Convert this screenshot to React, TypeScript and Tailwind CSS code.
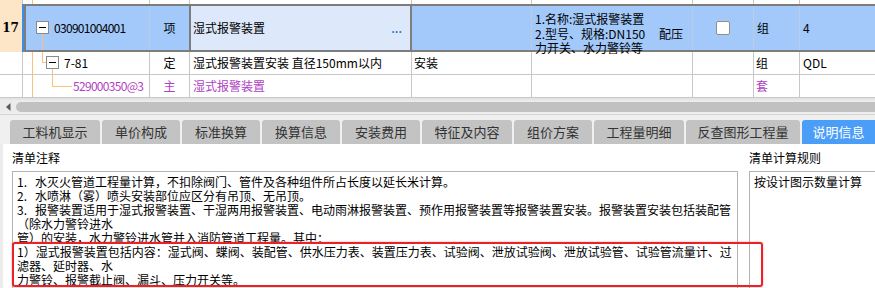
import React from "react";

const ORANGE = "#f7c27c";

function TreeBox({ left, top }: { left: number; top: number }) {
  return (
    <div
      className="absolute w-[13px] h-[13px] border border-[#8a8a8a] bg-white flex items-center justify-center"
      style={{ left, top }}
    >
      <div className="w-[7px] h-[1px] bg-black" />
    </div>
  );
}

function Lines({ segs, h }: { segs: [number, number, number, number][]; h: number }) {
  return (
    <svg className="absolute left-0 top-0" width={130} height={h}>
      {segs.map((s, i) => (
        <line key={i} x1={s[0]} y1={s[1]} x2={s[2]} y2={s[3]} stroke={ORANGE} strokeWidth={1} shapeRendering="crispEdges" />
      ))}
    </svg>
  );
}

function Grid() {
  const b = "border-r border-[#c8c8c8]";
  return (
    <div className="font-['Noto_Sans_CJK_SC',sans-serif] text-[12px] leading-[14px]">
      {/* partial row */}
      <div className="flex h-[4px]">
        <div className={`w-[23px] bg-[#fde5c8] ${b}`} />
        <div className={`w-[127px] relative ${b}`}>
          <Lines h={4} segs={[[9.5, 0, 9.5, 4]]} />
        </div>
        <div className={`w-[40px] ${b}`} />
        <div className={`w-[222px] ${b}`} />
        <div className={`w-[120px] ${b}`} />
        <div className={`w-[161px] ${b}`} />
        <div className={`w-[61px] ${b}`} />
        <div className={`w-[46px] ${b}`} />
        <div className="flex-1" />
      </div>
      {/* selected row */}
      <div className="flex h-[48px]">
        <div className="w-[24px] bg-[#fde5c8] border-r-2 border-[#3a8ee6] flex items-center justify-center pr-[1px] font-['DejaVu_Serif',serif] font-bold text-[12px]">
          17
        </div>
        <div className="flex-1 flex border-y-2 border-l-2 border-[#7d7d7d] bg-[#a2c9fa]">
          <div className="w-[124px] relative border-r border-[#bccde3] flex items-center pl-[28px]">
            <Lines h={44} segs={[[16.5, 28, 16.5, 44]]} />
            <TreeBox left={10} top={15} />
            <span className="relative tracking-[-0.7px]">030901004001</span>
          </div>
          <div className="w-[39px] flex items-center justify-center">项</div>
          <div className="w-[223px] border-x-2 border-[#7d7d7d] bg-[#dde9fb] flex items-center justify-between pl-[2px] pr-[8px]">
            <span>湿式报警装置</span>
            <span className="text-[#2f7fd0] font-bold text-[11px] tracking-[0px]">...</span>
          </div>
          <div className="w-[120px] border-r border-[#bccde3]" />
          <div className="w-[161px] border-r border-[#bccde3] pl-[3px] pt-[6px] leading-[14.5px] whitespace-nowrap">
            <div>1.名称:湿式报警装置</div>
            <div className="flex justify-between pr-[9px]">
              <span>2.型号、规格:DN150</span>
              <span>配压</span>
            </div>
            <div>力开关、水力警铃等</div>
          </div>
          <div className="w-[61px] border-r border-[#bccde3] flex items-center justify-center">
            <div className="w-[14px] h-[14px] bg-white border border-[#8e8e8e] rounded-[2px]" />
          </div>
          <div className="w-[46px] border-r border-[#bccde3] flex items-center pl-[3px]">组</div>
          <div className="flex-1 flex items-center pl-[3px]">4</div>
        </div>
      </div>
      {/* row 7-81 */}
      <div className="flex h-[23px] border-b border-[#c8c8c8]">
        <div className={`w-[23px] ${b}`} />
        <div className={`w-[127px] relative ${b} flex items-center pl-[41px]`}>
          <Lines h={22} segs={[[9.5, 0, 9.5, 22], [19.5, 0, 19.5, 10], [19, 10.5, 23, 10.5], [29.5, 16, 29.5, 22]]} />
          <TreeBox left={23} top={4} />
          <span className="relative">7-81</span>
        </div>
        <div className={`w-[40px] ${b} flex items-center justify-center`}>定</div>
        <div className={`w-[222px] ${b} flex items-center pl-[3px] whitespace-nowrap`}>湿式报警装置安装 直径150mm以内</div>
        <div className={`w-[120px] ${b} flex items-center pl-[2px]`}>安装</div>
        <div className={`w-[161px] ${b}`} />
        <div className={`w-[61px] ${b}`} />
        <div className={`w-[46px] ${b} flex items-center pl-[2px]`}>组</div>
        <div className="flex-1 flex items-center pl-[3px]">QDL</div>
      </div>
      {/* row main material */}
      <div className="flex h-[23px] border-b border-[#c8c8c8] text-[#b03fc4]">
        <div className={`w-[23px] ${b}`} />
        <div className={`w-[127px] relative ${b} flex items-center pl-[50px]`}>
          <Lines h={22} segs={[[9.5, 0, 9.5, 22], [29.5, 0, 29.5, 11], [29, 11.5, 49, 11.5]]} />
          <span className="relative tracking-[-0.7px] whitespace-nowrap">529000350@3</span>
        </div>
        <div className={`w-[40px] ${b} flex items-center justify-center`}>主</div>
        <div className={`w-[222px] ${b} flex items-center pl-[3px]`}>湿式报警装置</div>
        <div className={`w-[120px] ${b}`} />
        <div className={`w-[161px] ${b}`} />
        <div className={`w-[61px] ${b}`} />
        <div className={`w-[46px] ${b} flex items-center pl-[2px]`}>套</div>
        <div className="flex-1" />
      </div>
    </div>
  );
}

function Scroll() {
  return (
    <div>
      <div className="h-[2px] bg-[#e4e4e4]" />
      <div className="h-[13px] bg-[#ececec] flex items-center">
        <svg className="ml-[6px]" width="5" height="8" viewBox="0 0 5 8">
          <polygon points="4.5,0 0,4 4.5,8" fill="#5a5a5a" />
        </svg>
        <div className="ml-[5px] flex-1 h-[10px] rounded-l-full bg-[#c1c1c1]" />
      </div>
      <div className="h-[1px] bg-[#f2f2f2]" />
      <div className="h-[1px] bg-[#d2d2d2]" />
      <div className="h-[5px] bg-[#f0f0f0]" />
    </div>
  );
}

const tabs: [string, number][] = [
  ["工料机显示", 90],
  ["单价构成", 78],
  ["标准换算", 78],
  ["换算信息", 78],
  ["安装费用", 78],
  ["特征及内容", 90],
  ["组价方案", 78],
  ["工程量明细", 90],
  ["反查图形工程量", 114],
];

function Tabs() {
  return (
    <div className="h-[24px] flex gap-[2px] pl-[10px] bg-[#f0f0f0] font-['Noto_Sans_CJK_SC',sans-serif] text-[13px]">
      {tabs.map(([t, w]) => (
        <div
          key={t}
          className="h-full rounded-t-[3px] bg-[#c3c3c3] text-[#333] flex items-center justify-center"
          style={{ width: w }}
        >
          {t}
        </div>
      ))}
      <div className="h-full flex-1 rounded-tl-[3px] bg-[#4b9ef8] text-white flex items-center justify-center">
        说明信息
      </div>
    </div>
  );
}

function Content() {
  const lines: React.ReactNode[] = [
    <><span className="inline-block w-[18px]">1.</span>水灭火管道工程量计算，不扣除阀门、管件及各种组件所占长度以延长米计算。</>,
    <><span className="inline-block w-[18px]">2.</span>水喷淋（雾）喷头安装部位应区分有吊顶、无吊顶。</>,
    <><span className="inline-block w-[18px]">3.</span>报警装置适用于湿式报警装置、干湿两用报警装置、电动雨淋报警装置、预作用报警装置等报警装置安装。报警装置安装包括装配管</>,
    <>（除水力警铃进水</>,
    <>管）的安装，水力警铃进水管并入消防管道工程量。其中：</>,
    <>1）湿式报警装置包括内容：湿式阀、蝶阀、装配管、供水压力表、装置压力表、试验阀、泄放试验阀、泄放试验管、试验管流量计、过</>,
    <>滤器、延时器、水</>,
    <>力警铃、报警截止阀、漏斗、压力开关等。</>,
    <>2）干湿两用报警装置包括内容：两用阀、蝶阀、装配管、加速器、加速器压力表、供水压力表、试验阀、泄放试验阀（干、湿）、泄放</>,
  ];
  return (
    <div className="relative flex h-[145px] bg-white font-['Noto_Sans_CJK_SC',sans-serif] text-[12px] leading-[14px] text-black">
      <div className="w-[3px] bg-[#ececec]" />
      <div className="ml-[9px] w-[726px] flex flex-col">
        <div className="pt-[7px] h-[27px]">清单注释</div>
        <div className="flex-1 border border-[#b4b4b4] pl-[4px] pt-[3px] whitespace-nowrap overflow-hidden">
          {lines.map((l, i) => (
            <div key={i} className="h-[14px]">{l}</div>
          ))}
        </div>
      </div>
      <div className="ml-[11px] flex-1 flex flex-col">
        <div className="pt-[7px] h-[27px]">清单计算规则</div>
        <div className="flex-1 border border-r-0 border-[#b4b4b4] pl-[4px] pt-[3px] whitespace-nowrap">
          按设计图示数量计算
        </div>
      </div>
      <div className="absolute left-[12px] top-[98px] w-[751px] h-[45px] border-2 border-[#ea2228] rounded-[3px] shadow-[0_0_2px_rgba(255,0,0,0.45)]" />
    </div>
  );
}

export default function App() {
  return (
    <div className="w-[875px] h-[288px] overflow-hidden bg-white">
      <Grid />
      <Scroll />
      <Tabs />
      <Content />
    </div>
  );
}
